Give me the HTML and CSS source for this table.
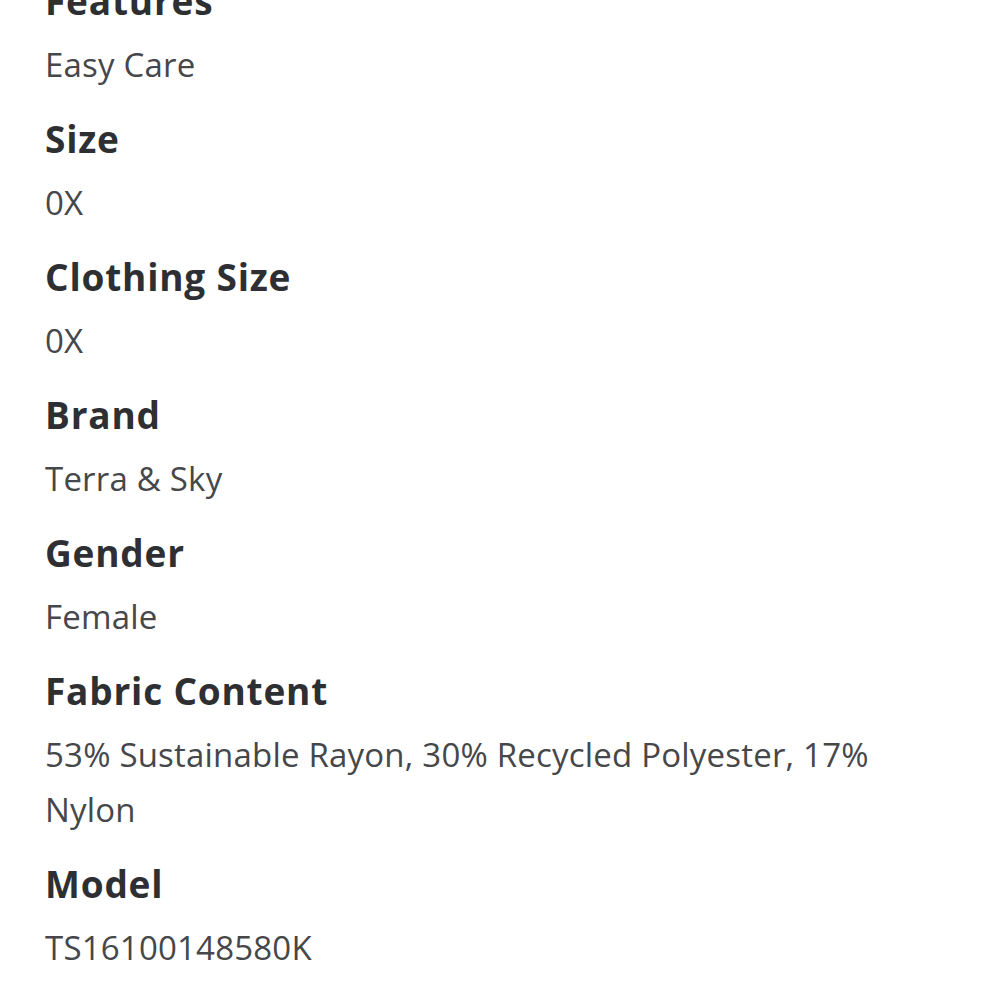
FILE: index.html
```html
<!DOCTYPE html>
<html lang="en">
<head>
  <meta charset="UTF-8">
  <meta name="viewport" content="width=device-width, initial-scale=1.0">
  <title>Specifications</title>
  <link rel="stylesheet" href="styles.css">
</head>
<body>
  <div class="specs">
    <div class="spec">
      <h3>Features</h3>
      <p>Easy Care</p>
    </div>
    <div class="spec">
      <h3>Size</h3>
      <p>0X</p>
    </div>
    <div class="spec">
      <h3>Clothing Size</h3>
      <p>0X</p>
    </div>
    <div class="spec">
      <h3>Brand</h3>
      <p>Terra &amp; Sky</p>
    </div>
    <div class="spec">
      <h3>Gender</h3>
      <p>Female</p>
    </div>
    <div class="spec">
      <h3>Fabric Content</h3>
      <p>53% Sustainable Rayon, 30% Recycled Polyester, 17% Nylon</p>
    </div>
    <div class="spec">
      <h3>Model</h3>
      <p>TS16100148580K</p>
    </div>
  </div>
</body>
</html>
```

FILE: styles.css
```css
/* Base Styles */
body {
  font-family: "Open Sans", Lato, Arial, sans-serif;
  margin: 0;
  padding: 0 45px;
  background: #ffffff;
}

.specs {
  display: flex;
  flex-direction: column;
  gap: 25px;
  margin-top: -21px;
}

.spec h3 {
  margin: 0 0 14px;
  font-size: 37px;
  line-height: 44px;
  font-weight: 700;
  letter-spacing: 0.8px;
  color: #2e2f32;
}

.spec p {
  margin: 0;
  font-size: 33px;
  line-height: 55px;
  letter-spacing: 0.2px;
  color: #46474a;
}
```
